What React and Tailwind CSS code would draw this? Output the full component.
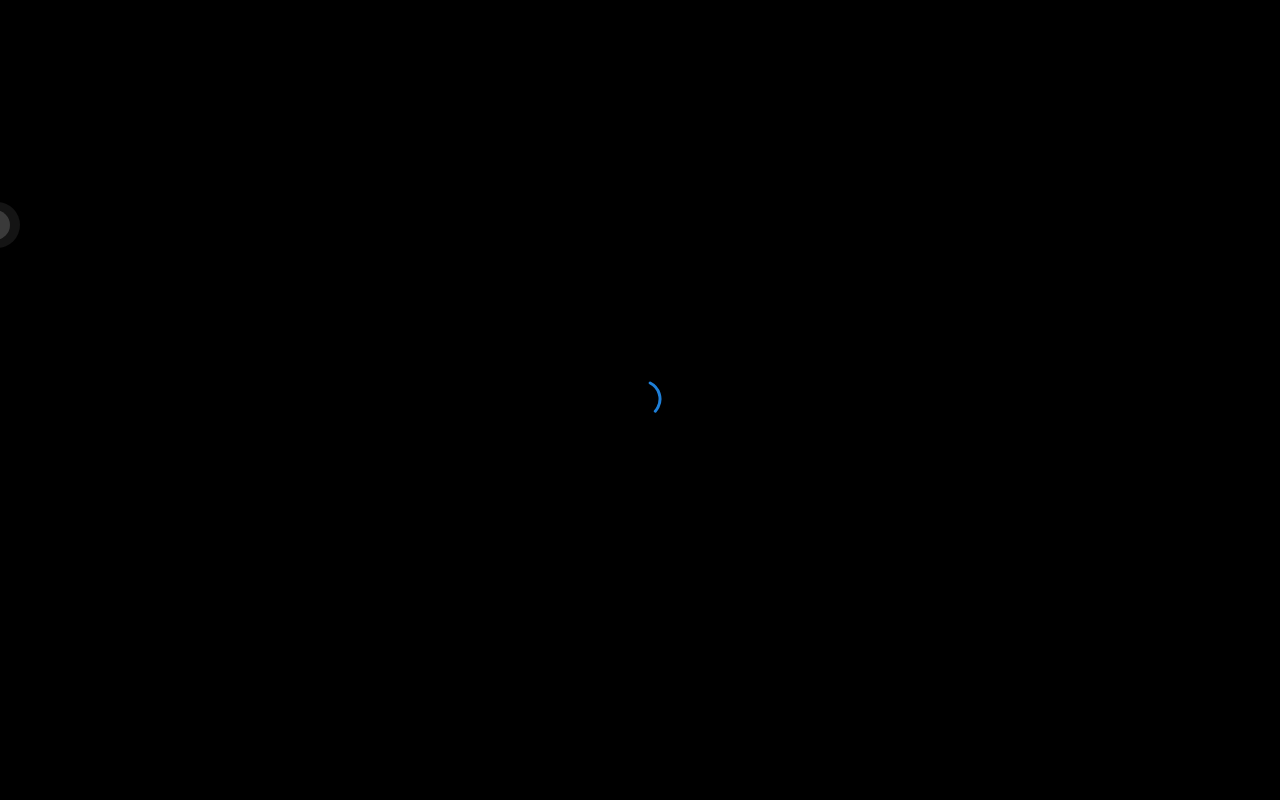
export default function App() {
  return (
    <div className="relative min-h-screen w-full overflow-hidden bg-black flex items-center justify-center">
      {/* side handle */}
      <div className="absolute left-[-26px] top-[202px] w-[46px] h-[46px] pr-[4px] rounded-full bg-[#141414] flex items-center justify-center">
        <div className="w-[30px] h-[30px] shrink-0 rounded-full bg-[#3a3a3a]" />
      </div>

      {/* loading spinner */}
      <svg width="40" height="40" viewBox="0 0 40 40" className="ml-[4px] mt-[-2px]">
        <circle
          cx="20"
          cy="20"
          r="18"
          fill="none"
          stroke="#1e7fd8"
          strokeWidth="3"
          strokeLinecap="round"
          strokeDasharray="33 113"
          transform="rotate(-63 20 20)"
        />
      </svg>
    </div>
  );
}
